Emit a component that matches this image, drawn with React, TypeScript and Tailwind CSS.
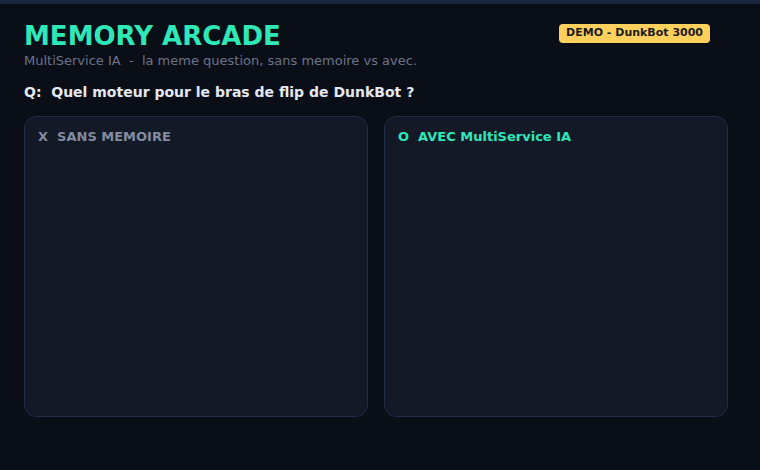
export default function App() {
  return (
    <div
      className="w-[760px] h-[470px] bg-[#0a0e17] border-t-4 border-[#1b2440] overflow-hidden"
      style={{ fontFamily: '"DejaVu Sans", sans-serif' }}
    >
      <div className="pl-6 pr-8 pt-[16px]">
        <div className="flex items-start justify-between">
          <div>
            <h1 className="text-[26px] leading-[32px] font-bold text-[#2ee8b8]">MEMORY ARCADE</h1>
            <p className="text-[13px] leading-[18px] text-[#6b7489]">
              MultiService IA&nbsp; - &nbsp;la meme question, sans memoire vs avec.
            </p>
          </div>
          <div className="mt-[4px] mr-[18px] rounded-[4px] bg-[#ffd15c] px-[7px] h-[19px] flex items-center text-[11px] font-bold text-[#1a1a1a]">
            DEMO - DunkBot 3000
          </div>
        </div>
        <p className="mt-[12px] text-[14px] leading-[20px] font-bold text-[#e4e8f0]">
          Q:&nbsp; Quel moteur pour le bras de flip de DunkBot ?
        </p>
        <div className="mt-[14px] grid grid-cols-2 gap-4">
          <div className="h-[301px] rounded-[12px] border border-[#232d47] bg-[#131927] px-[13px] py-[12px]">
            <div className="text-[13px] leading-[16px] font-bold text-[#838ba1]">X&nbsp; SANS MEMOIRE</div>
          </div>
          <div className="h-[301px] rounded-[12px] border border-[#232d47] bg-[#131927] px-[13px] py-[12px]">
            <div className="text-[13px] leading-[16px] font-bold text-[#2ee8b8]">O&nbsp; AVEC MultiService IA</div>
          </div>
        </div>
      </div>
    </div>
  );
}
